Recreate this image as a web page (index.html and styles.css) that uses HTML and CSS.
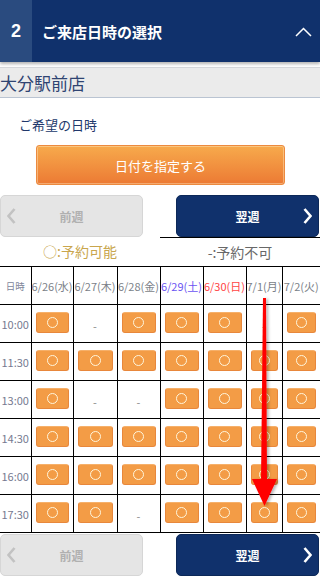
FILE: index.html
```html
<!DOCTYPE html>
<html lang="ja">
<head>
    <meta charset="UTF-8">
    <meta name="viewport" content="width=device-width, initial-scale=1.0">
    <title>ご来店日時の選択</title>
    <link rel="stylesheet" href="styles.css">
</head>
<body>
<div class="page">
    <div class="step-header">
        <div class="step-no">2</div>
        <div class="step-title">ご来店日時の選択</div>
        <svg class="toggle" width="17" height="10" viewBox="0 0 17 10"><polyline points="1,9 8.5,1.5 16,9" fill="none" stroke="#fff" stroke-width="1.5"/></svg>
    </div>

    <div class="store">大分駅前店</div>

    <div class="wish">ご希望の日時</div>
    <button class="date-btn">日付を指定する</button>

    <div class="week-nav">
        <button class="week prev">
            <svg width="9" height="16" viewBox="0 0 9 16"><polyline points="7.5,1 1.5,8 7.5,15" fill="none" stroke="#c2c2c2" stroke-width="2.6"/></svg>
            <span>前週</span>
        </button>
        <button class="week next">
            <span>翌週</span>
            <svg width="9" height="16" viewBox="0 0 9 16"><polyline points="1.5,1 7.5,8 1.5,15" fill="none" stroke="#fff" stroke-width="2.6"/></svg>
        </button>
    </div>

    <div class="legend">
        <div class="ok">○:予約可能</div>
        <div class="ng">-:予約不可</div>
    </div>

    <table class="schedule">
        <colgroup>
            <col style="width:31px"><col style="width:42px"><col style="width:44px"><col style="width:43px">
            <col style="width:43px"><col style="width:43px"><col style="width:36px"><col style="width:38px">
        </colgroup>
        <thead>
            <tr>
                <th class="corner">日時</th>
                <th>6/26(水)</th><th>6/27(木)</th><th>6/28(金)</th>
                <th class="sat">6/29(土)</th><th class="sun">6/30(日)</th>
                <th>7/1(月)</th><th>7/2(火)</th>
            </tr>
        </thead>
        <tbody id="slots"></tbody>
    </table>

    <div class="week-nav bottom">
        <button class="week prev">
            <svg width="9" height="16" viewBox="0 0 9 16"><polyline points="7.5,1 1.5,8 7.5,15" fill="none" stroke="#c2c2c2" stroke-width="2.6"/></svg>
            <span>前週</span>
        </button>
        <button class="week next">
            <span>翌週</span>
            <svg width="9" height="16" viewBox="0 0 9 16"><polyline points="1.5,1 7.5,8 1.5,15" fill="none" stroke="#fff" stroke-width="2.6"/></svg>
        </button>
    </div>

    <!-- annotation arrow drawn over the table -->
    <svg class="arrow" width="320" height="578" viewBox="0 0 320 578">
        <defs>
            <filter id="sh" x="-50%" y="-10%" width="200%" height="120%">
                <feDropShadow dx="2" dy="1" stdDeviation="1.5" flood-color="#000" flood-opacity="0.3"/>
            </filter>
        </defs>
        <g filter="url(#sh)" fill="#ff0000">
            <polygon points="263,298 266,298 267,482 261,482"/>
            <polygon points="252,479 277,479 264.5,506"/>
        </g>
    </svg>
</div>

<script>
    // 1 = bookable, 0 = not bookable
    const slots = [
        ['10:00', [1, 0, 1, 1, 1, 0, 1]],
        ['11:30', [1, 1, 1, 1, 1, 1, 1]],
        ['13:00', [1, 0, 0, 1, 1, 1, 1]],
        ['14:30', [1, 1, 1, 1, 1, 1, 1]],
        ['16:00', [1, 1, 1, 1, 1, 1, 1]],
        ['17:30', [1, 1, 0, 1, 1, 1, 1]]
    ];

    const body = document.getElementById('slots');
    slots.forEach(([time, days]) => {
        const tr = document.createElement('tr');
        let html = '<td class="time">' + time + '</td>';
        days.forEach(d => {
            html += d
                ? '<td><span class="slot"><span class="ring"></span></span></td>'
                : '<td><span class="none">-</span></td>';
        });
        tr.innerHTML = html;
        body.appendChild(tr);
    });
</script>
</body>
</html>
```

FILE: styles.css
```css
body {
    margin: 0;
    font-family: "Noto Sans CJK JP", "Noto Sans", sans-serif;
    background: #fff;
}

.page {
    position: relative;
    width: 320px;
    height: 578px;
    overflow: hidden;
}

.step-header {
    display: flex;
    align-items: center;
    height: 62px;
    background: #10316c;
    color: #fff;
    box-shadow: 0 2px 3px rgba(0, 0, 0, 0.3);
}

.step-no {
    width: 32px;
    height: 100%;
    display: flex;
    align-items: center;
    justify-content: center;
    background: #2a4b7f;
    font-family: "Liberation Sans", Arial, sans-serif;
    font-weight: bold;
    font-size: 18px;
}

.step-title {
    margin-left: 10px;
    font-size: 15px;
    font-weight: bold;
}

.toggle {
    margin-left: auto;
    margin-right: 8px;
    margin-top: 2px;
}

.store {
    margin-top: 5px;
    height: 29px;
    line-height: 29px;
    background: #ebebeb;
    border-top: 1px solid #d4d6da;
    border-bottom: 1px solid #bac4d2;
    color: #2f4472;
    font-size: 17px;
    font-weight: normal;
}

.wish {
    margin-top: 17px;
    padding-left: 19px;
    height: 20px;
    line-height: 20px;
    font-size: 13px;
    color: #21386b;
}

.date-btn {
    display: block;
    margin: 10px 0 0 36px;
    width: 249px;
    height: 40px;
    border: 1px solid #ec8a3f;
    border-radius: 3px;
    background: linear-gradient(#f7aa4c, #ec7a34);
    box-shadow: inset 0 0 0 1px rgba(255, 230, 190, 0.45);
    color: #fff;
    font-family: inherit;
    font-size: 13px;
}

.week-nav {
    display: flex;
    justify-content: space-between;
    margin-top: 10px;
    padding-right: 1px;
}

.week-nav.bottom {
    margin-top: 1px;
}

.week {
    display: grid;
    grid-template-columns: 24px 1fr 24px;
    align-items: center;
    width: 143px;
    height: 42px;
    padding: 0;
    border-radius: 5px;
    font-family: inherit;
    font-size: 12px;
    font-weight: bold;
}

.week.prev {
    background: #e5e5e5;
    border: 1px solid #d6d6d6;
    color: #b0b0b0;
}

.week.prev svg {
    margin-left: 6px;
}

.week.prev span {
    grid-column: 2;
}

.week.next {
    background: #10316c;
    border: 1px solid #0c2858;
    color: #fff;
}

.week.next span {
    grid-column: 2;
}

.week.next svg {
    grid-column: 3;
    justify-self: end;
    margin-right: 6px;
}

.legend {
    display: flex;
    height: 29px;
    line-height: 29px;
    font-size: 14px;
    text-align: center;
}

.legend div {
    flex: 1;
}

.legend .ok {
    color: #c9a64d;
}

.legend .ng {
    color: #686868;
    border-top: 1px solid #000;
}

.schedule {
    width: 320px;
    table-layout: fixed;
    border-collapse: collapse;
    text-align: center;
}

.schedule th,
.schedule td {
    height: 37px;
    padding: 0 4px;
    border: 1px solid #000;
    vertical-align: middle;
}

.schedule th {
    padding: 0;
    font-weight: normal;
    font-size: 11px;
    color: #7b7f88;
    white-space: nowrap;
}

.schedule tr > :first-child {
    border-left: none;
}

.schedule tr > :last-child {
    border-right: none;
}

.schedule th.corner {
    font-size: 9.5px;
    color: #80869a;
}

.schedule th.sat {
    color: #6b55f2;
}

.schedule th.sun {
    color: #ff4444;
}

.schedule td.time {
    padding: 0;
    font-size: 11px;
    color: #767a90;
}

.slot {
    display: flex;
    align-items: center;
    justify-content: center;
    height: 19px;
    margin-top: -2px;
    background: #f39c46;
    border: 1px solid #e8873b;
    border-top-color: #f6b06a;
    border-radius: 3px;
}

.ring {
    width: 9px;
    height: 9px;
    border: 1.5px solid #fff6dc;
    border-radius: 50%;
}

.none {
    font-size: 11px;
    color: #8a8a8a;
}

.arrow {
    position: absolute;
    top: 0;
    left: 0;
    pointer-events: none;
}
```
